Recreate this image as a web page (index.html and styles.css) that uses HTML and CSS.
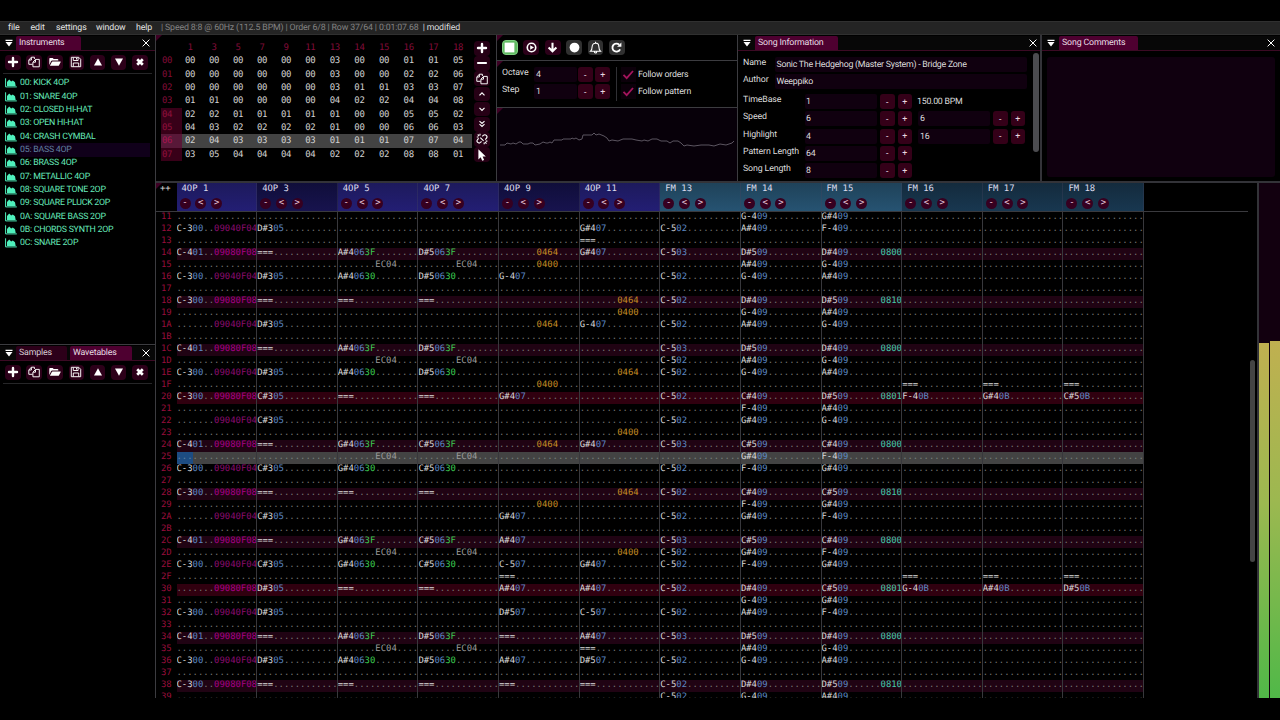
FILE: index.html
```html
<!DOCTYPE html>
<html lang="en">
<head>
<meta charset="utf-8">
<title>Tracker</title>
<link rel="stylesheet" href="styles.css">
</head>
<body>
<svg class="defs" width="0" height="0">
  <symbol id="plus" viewBox="0 0 12 12"><path d="M6 2v8M2 6h8" stroke="currentColor" stroke-width="2.4" stroke-linecap="round"/></symbol>
  <symbol id="minus" viewBox="0 0 12 12"><path d="M2 6h8" stroke="currentColor" stroke-width="2.2" stroke-linecap="round"/></symbol>
  <symbol id="copy" viewBox="0 0 12 12"><path d="M4.6 8.3H.8V4l2.6-2.8h3V3M3.4 1.4V4H1M4.9 6.2l2.6-2.8h3.8v7.4H4.9zM7.5 3.6v2.6H5" fill="none" stroke="currentColor" stroke-width=".95" stroke-linejoin="round"/></symbol>
  <symbol id="folder" viewBox="0 0 12 12"><path d="M.3 9V2.7q0-.7.7-.7h2.7l1 1H8.500q.8 0 .8.8v.8H3.200Q2.400 4.600 2 5.300z" fill="currentColor"/><path d="M.9 9.800 3 5.800q.2-.4.700-.4h7.700q.6 0 .3.600L9.900 9.400q-.2.400-.7.400z" fill="currentColor"/></symbol>
  <symbol id="save" viewBox="0 0 12 12"><path d="M1.300 1.300h7.400l2 2v7.400H1.300zM3.300 1.500v3h4.800v-3M3.300 10.500V7h5.400v3.500M6.500 2v1.500" fill="none" stroke="currentColor" stroke-width=".95" stroke-linejoin="round"/></symbol>
  <symbol id="up" viewBox="0 0 12 12"><path d="M6 2.200 10 9.500H2z" fill="currentColor"/></symbol>
  <symbol id="down" viewBox="0 0 12 12"><path d="M6 9.800 10 2.500H2z" fill="currentColor"/></symbol>
  <symbol id="times" viewBox="0 0 12 12"><path d="m3.200 3.200 5.600 5.600m0-5.600L3.200 8.800" stroke="currentColor" stroke-width="2.700"/></symbol>
  <symbol id="close" viewBox="0 0 12 12"><path d="m2.600 2.600 6.800 6.800m0-6.800L2.600 9.400" stroke="currentColor" stroke-width="1"/></symbol>
  <symbol id="menu" viewBox="0 0 12 12"><path d="M2.500 2.700h7v1.300h-7zM2.500 5h7L6 9.400z" fill="currentColor"/></symbol>
  <symbol id="area" viewBox="0 0 12 10"><path d="M.6.300v8.600h11.200" fill="none" stroke="currentColor" stroke-width="1"/><path d="M2 7.900V4l2.200-2.400 2 1.800 1.600-1L10 4.200l.7 3.700z" fill="currentColor"/></symbol>
  <symbol id="chup" viewBox="0 0 12 12"><path d="m3.500 7.300 2.500-2.500 2.500 2.500" fill="none" stroke="currentColor" stroke-width="1.200"/></symbol>
  <symbol id="chdn" viewBox="0 0 12 12"><path d="m3.500 4.800 2.500 2.500 2.500-2.500" fill="none" stroke="currentColor" stroke-width="1.200"/></symbol>
  <symbol id="chdd" viewBox="0 0 12 12"><path d="m3.500 3.200 2.500 2.300 2.500-2.300M3.500 6.200l2.500 2.300 2.500-2.300" fill="none" stroke="currentColor" stroke-width="1.100"/></symbol>
  <symbol id="unlink" viewBox="0 0 12 12"><path d="M6.300 3.400 7.300 2.400q1.600-1.300 3 0t.1 3L9.200 6.500M5.500 8.300 4.600 9.400q-1.500 1.300-2.900 0t-.1-2.900l1.100-1.100M4.300 4.700l3.300 3.100M4 .8v1.700M.8 4h1.700M1.700 1.500l1.400 1.400M8.200 11.300V9.600M11.400 8.100H9.700M10.500 10.600 9.100 9.200" fill="none" stroke="currentColor" stroke-width="1.150"/></symbol>
  <symbol id="cursor" viewBox="0 0 12 12"><path d="M2.400.2v10.200l2.300-2.200 1.500 3.600 1.900-.8-1.500-3.500h3.200z" fill="currentColor"/></symbol>
  <symbol id="stop" viewBox="0 0 12 12"><path d="M1.500 1.500h9v9h-9z" fill="#fff"/></symbol>
  <symbol id="playc" viewBox="0 0 12 12"><circle cx="6" cy="6" r="3.900" fill="none" stroke="currentColor" stroke-width="1.500"/><path d="M4.800 3.900 8.300 6 4.800 8.100z" fill="currentColor"/></symbol>
  <symbol id="arrdn" viewBox="0 0 12 12"><path d="M6 1.500v8M2.400 6 6 9.500 9.600 6" fill="none" stroke="currentColor" stroke-width="1.900"/></symbol>
  <symbol id="rec" viewBox="0 0 12 12"><circle cx="6" cy="6" r="4.500" fill="currentColor"/></symbol>
  <symbol id="bell" viewBox="0 0 12 12"><path d="M1.300 9.500Q2.900 8 2.900 5.300 3 2.200 6 2t3.100 3.300Q9.100 8 10.700 9.500zM4.900 9.700q0 1.200 1.100 1.300t1.100-1.300M6 .7V2" fill="none" stroke="currentColor" stroke-width="1"/></symbol>
  <symbol id="redo" viewBox="0 0 12 12"><path d="M9.300 7.700A3.700 3.700 0 1 1 8.500 3.400" fill="none" stroke="currentColor" stroke-width="1.700"/><path d="M10.500 1.300v4H6.500z" fill="currentColor"/></symbol>
  <symbol id="check" viewBox="0 0 12 12"><path d="m1.500 6.300 3.200 3.400L11 2.500" fill="none" stroke="currentColor" stroke-width="1.800"/></symbol>
</svg>

<nav class="menubar">
  <span class="m-file">file</span><span class="m-edit">edit</span><span class="m-set">settings</span><span class="m-win">window</span><span class="m-help">help</span>
  <span class="status">| Speed 8:8 @ 60Hz (112.5 BPM) | Order 6/8 | Row 37/64 | 0:01:07.68 &nbsp;<b>| modified</b></span>
</nav>

<main class="main">
  <aside class="side">
    <section class="instruments">
      <header class="tabs"><svg class="ico"><use href="#menu"/></svg><span class="tab active t-ins">Instruments</span><svg class="ico x"><use href="#close"/></svg></header>
      <div class="tools" data-tools></div>
      <ul class="inslist" id="inslist"></ul>
    </section>
    <section class="samples">
      <header class="tabs"><svg class="ico"><use href="#menu"/></svg><span class="tab t-sam">Samples</span><span class="tab active t-wav">Wavetables</span><svg class="ico x"><use href="#close"/></svg></header>
      <div class="tools" data-tools></div>
    </section>
  </aside>

  <div class="work">
    <div class="top">
      <section class="orders corner">
        <div class="ordtable" id="orders"></div>
        <div class="ordtools" id="ordtools"></div>
      </section>

      <div class="controls">
        <section class="transport corner">
          <button class="tb play"><svg><use href="#stop"/></svg></button>
          <button class="tb"><svg><use href="#playc"/></svg></button>
          <button class="tb"><svg><use href="#arrdn"/></svg></button>
          <button class="tb grey"><svg><use href="#rec"/></svg></button>
          <button class="tb grey"><svg><use href="#bell"/></svg></button>
          <button class="tb grey"><svg><use href="#redo"/></svg></button>
        </section>
        <section class="edit corner">
          <div class="steppers">
            <div class="srow"><label>Octave</label><span class="field">4</span><button class="pm">-</button><button class="pm">+</button></div>
            <div class="srow"><label>Step</label><span class="field">1</span><button class="pm">-</button><button class="pm">+</button></div>
          </div>
          <div class="follow">
            <div class="frow"><i><svg><use href="#check"/></svg></i>Follow orders</div>
            <div class="frow"><i><svg><use href="#check"/></svg></i>Follow pattern</div>
          </div>
        </section>
        <section class="scope corner">
          <svg viewBox="0 0 240 73" width="240" height="73"><polyline fill="none" stroke="#5b5560" stroke-width="1" points="3,37 8,37 10,35 14,36 16,35 19,36 22,34 24,34 26,36 31,36 33,35 36,35 38,37 43,36 46,34 49,35 51,35 53,34 55,35 57,32 65,32 66,31 74,31 75,30 77,31 79,30 82,32 85,31 86,27 95,27 97,25 99,27 102,26 107,28 110,30 112,33 115,32 121,33 126,31 135,31 139,32 145,33 147,32 151,33 155,31 160,31 164,33 170,33 173,35 176,33 181,33 184,35 187,38 190,37 197,38 204,37 212,37 217,38 223,36 229,37 235,35 237,33"/></svg>
        </section>
      </div>

      <section class="info">
        <header class="tabs"><svg class="ico"><use href="#menu"/></svg><span class="tab active t-info">Song Information</span><svg class="ico x"><use href="#close"/></svg></header>
        <div class="infobody">
          <div class="form">
            <div class="trow"><label>Name</label><span class="field">Sonic The Hedgehog (Master System) - Bridge Zone</span></div>
            <div class="trow"><label>Author</label><span class="field">Weeppiko</span></div>
            <div class="nrow first"><label>TimeBase</label><span class="field">1</span><button class="pm">-</button><button class="pm">+</button><span class="plain">150.00 BPM</span></div>
            <div class="nrow"><label>Speed</label><span class="field">6</span><button class="pm">-</button><button class="pm">+</button><span class="field f2">6</span><button class="pm">-</button><button class="pm">+</button></div>
            <div class="nrow"><label>Highlight</label><span class="field">4</span><button class="pm">-</button><button class="pm">+</button><span class="field f2">16</span><button class="pm">-</button><button class="pm">+</button></div>
            <div class="nrow"><label>Pattern Length</label><span class="field">64</span><button class="pm">-</button><button class="pm">+</button></div>
            <div class="nrow"><label>Song Length</label><span class="field">8</span><button class="pm">-</button><button class="pm">+</button></div>
          </div>
          <div class="vbar"></div>
        </div>
      </section>

      <section class="comments">
        <header class="tabs"><svg class="ico"><use href="#menu"/></svg><span class="tab active t-com">Song Comments</span><svg class="ico x"><use href="#close"/></svg></header>
        <div class="notes"></div>
      </section>
    </div>

    <div class="bottom">
      <section class="pattern corner">
        <div class="phead" id="phead"></div>
        <div class="prows" id="prows"></div>
        <div class="pscroll"></div>
      </section>
      <section class="meters"><div class="meter l"></div><div class="meter r"></div></section>
    </div>
  </div>
</main>
<script src="script.js"></script>
</body>
</html>
```
FILE: styles.css
```css
* { box-sizing: border-box; }
html, body { margin: 0; background: #000; }
body { width: 1280px; height: 720px; padding-top: 21px; overflow: hidden; color: #dcdcdc; font: 8.8px/12px Roboto, sans-serif; letter-spacing: -.25px; white-space: nowrap; text-rendering: geometricPrecision; }
button { border: 0; padding: 0; color: #eee; font: inherit; display: flex; align-items: center; justify-content: center; }
svg { display: block; flex: none; }
.defs { position: absolute; }

.menubar { height: 14px; background: #242424; border-top: 1px solid #303030; border-bottom: 1px solid #303030; display: flex; align-items: center; padding-left: 8px; line-height: 13px; color: #e4e4e4; letter-spacing: -.1px; }
.m-file { width: 22.500px; }
.m-edit { width: 25.500px; }
.m-set { width: 40px; }
.m-win { width: 40px; }
.m-help { width: 25px; }
.status { color: #828282; letter-spacing: -.15px; }
.status b { font-weight: 400; color: #dcdcdc; }

.main { display: flex; height: 663px; }
.side { width: 156px; border-right: 1px solid #3c3c40; display: flex; flex-direction: column; }
.instruments { height: 309px; padding-top: 1px; }
.samples { flex: 1; border-top: 1px solid #3c3c40; padding-top: 1px; }

.tabs { height: 15px; background: #070707; border-bottom: 1px solid #3c0a24; display: flex; align-items: center; padding: 0 3px; letter-spacing: -.15px; }
.tabs .ico { width: 12px; height: 12px; color: #fff; }
.tabs .x { margin-left: auto; }
.info .tabs { padding-right: 1px; }
.tab { height: 14px; line-height: 14px; background: #2c0019; border-radius: 2px 2px 0 0; padding-left: 3px; color: #d8ccd4; }
.tab.active { background: #4e0030; color: #e8dce4; }
.t-ins { margin-left: 1px; width: 65px; }
.t-sam { margin-left: 1px; width: 51px; }
.t-wav { margin-left: 3px; width: 62px; }
.t-info { margin-left: 2px; width: 83px; }
.t-com { margin-left: 2px; width: 79px; }

.tools { height: 23px; margin: 0 3px; padding: 0 2px; border-bottom: 1px solid #262628; display: flex; align-items: center; gap: 5.7px; }
.tools button { width: 15.5px; height: 15px; background: #2c0019; border-radius: 4px; color: #fff; }
.tools svg { width: 12px; height: 12px; }

.inslist { list-style: none; margin: 0; padding: 2.600px 5px 0; color: #66eabb; }
.inslist li { height: 13.33px; line-height: 14px; display: flex; align-items: center; gap: 3px; }
.inslist svg { width: 12px; height: 10px; color: #50f0bc; }
.inslist .sel { background: linear-gradient(90deg, transparent 8%, #10001a 12%); }

.work { flex: 1; display: flex; flex-direction: column; min-width: 0; }
.top { height: 148px; display: flex; border-bottom: 2px solid #333338; }
.corner { position: relative; }
.corner::before { content: ""; position: absolute; left: 0; top: 0; border-top: 6px solid #3e0024; border-right: 6px solid transparent; }

.orders { width: 341px; border-right: 1px solid #3c3c40; display: flex; padding: 6px 5px 0 5px; font: 9px/14.2px "DejaVu Sans Mono", monospace; letter-spacing: -.3px; }
.ordtable { width: 311px; }
.orow { height: 13.35px; display: grid; grid-template-columns: 17px repeat(5, 24px) 24.5px repeat(6, 24.65px); grid-template-rows: 13.35px; text-align: center; color: #d0d0d0; }
.orow span:first-child { text-align: left; padding-left: 1px; margin-right: -4px; }
.orow.h, .orow span:first-child { color: #800c38; }
.orow.hl span:first-child { background: #380018; color: #90103c; }
.orow.cur { background: #434343; }
.orow.cur span:first-child { background: #581838; color: #a81450; }
.ordtools { display: flex; flex-direction: column; gap: .6px; padding-left: 2px; }
.ordtools button { width: 15.5px; height: 14.6px; background: #260015; border-radius: 4px; color: #fff; }
.ordtools svg { width: 12px; height: 12px; }

.controls { width: 241px; border-right: 1px solid #3c3c40; display: flex; flex-direction: column; }
.transport { height: 26px; display: flex; align-items: center; gap: 5.6px; padding-left: 5px; border-bottom: 1px solid #3c3c40; }
.tb { width: 15.800px; height: 15px; border-radius: 4px; background: #2c0019; color: #fff; }
.tb svg { width: 13px; height: 13px; }
.tb.play { background: #5fb860; border: 1px solid #7fd080; }
.tb.grey { background: #303030; }
.edit { height: 47px; border-bottom: 1px solid #3c3c40; display: flex; padding: 6px 0 0 5px; letter-spacing: -.1px; }
.steppers { width: 115px; height: 34px; border-right: 1px solid #303034; }
.srow, .frow { display: flex; height: 17.4px; }
.srow label { width: 32px; line-height: 13px; }
.field { background: #10000f; height: 15px; line-height: 16px; padding-left: 2px; border-radius: 2px; }
.srow .field { width: 43px; }
.pm { width: 14.500px; height: 15px; background: #340018; border-radius: 3px; margin-left: 2.900px; color: #e8d8e0; }
.srow .pm:nth-of-type(1) { margin-left: 1px; }
.frow { width: 110px; padding-left: 4px; line-height: 16px; letter-spacing: -.2px; }
.frow i { width: 15px; height: 15px; margin-right: 2px; background: #0c000a; }
.frow i svg { width: 12px; height: 13px; margin: 1px; color: #a4145c; }
.scope { flex: 1; background: #070009; }

.info { width: 304px; border-right: 2px solid #333338; padding-top: 1px; }
.infobody { display: flex; height: 130px; overflow: hidden; letter-spacing: -.12px; }
.form { width: 294px; padding: 6px 0 0 5px; }
.trow, .nrow { display: flex; height: 17.300px; }
.trow label { width: 32px; line-height: 13px; }
.trow .field { width: 252px; padding-left: 1.500px; letter-spacing: -.25px; }
.nrow label { width: 62px; line-height: 13px; }
.nrow.first { margin-top: 2.500px; }
.nrow .field { width: 72px; padding-left: 1px; }
.nrow .pm { margin-left: 3px; }
.nrow .f2 { width: 72px; margin-left: 6px; padding-left: 2px; }
.plain { margin-left: 5px; line-height: 16px; letter-spacing: -.25px; }
.vbar { width: 6px; height: 99px; margin-top: 2px; background: #4c4c50; border-radius: 3px; margin-left: 1px; }

.comments { flex: 1; padding-top: 1px; }
.notes { margin: 6px 5px 0 5px; height: 120px; background: #10000f; border-radius: 3px; }

.bottom { flex: 1; display: flex; min-height: 0; }
.pattern { width: 1102px; overflow: hidden; font: 8.923px/12px "DejaVu Sans Mono", monospace; letter-spacing: 0; }
.phead { display: flex; height: 29px; width: 1092px; border-bottom: 1px solid #3a3a3e; }
.pp { width: 20.500px; padding-left: 4px; line-height: 12px; color: #ddd; }
.ch { width: 80.640px; padding-left: 5px; border-right: 1px solid #44446055; line-height: 12px; color: #dde; }
.ch.a { background: linear-gradient(#1d1a5c, #231e74); }
.ch.b { background: linear-gradient(#100e3a, #17134e); }
.ch.c { background: linear-gradient(#1f4259, #265372); }
.ch.d { background: linear-gradient(#142b3d, #183750); }
.chb { display: flex; gap: 4.800px; margin-left: -2px; padding-top: 3px; }
.chb b { width: 11px; height: 11px; border-radius: 6px; background: #360020; color: #e8c8dc; font-weight: 400; line-height: 11px; text-align: center; }
.prows { width: 988.200px; }
.prow { height: 12px; line-height: 10.400px; display: flex; color: #767672; white-space: pre; }
.prow .n { width: 20.500px; padding-left: 5px; color: #980e3c; background: #000; }
.cell { width: 80.640px; height: 12px; border-right: 1px solid #38383c; overflow: hidden; }
.prow.h1 { background: #200313; }
.prow.h2 { background: #30000f; }
.prow.cur { background: #434343; color: #77807c; }
.no { color: #d8d8d8; }
.in { color: #5c88c4; }
.vo { color: #3ccc50; }
.fa { color: #8c0c70; }
.h1 .fa, .h2 .fa { color: #a80088; }
.fe { color: #9c9c9c; }
.fo { color: #c48c24; }
.ft { color: #44ccac; }
.sel { background: #1d4c82; display: inline-block; height: 12px; vertical-align: top; color: #6080a0; }
.pscroll { position: absolute; right: 2px; top: 177px; width: 5px; height: 202px; border-radius: 3px; background: #444; }
.meters { flex: 1; border-left: 2px solid #333338; background: #12000f; display: flex; align-items: flex-end; gap: 1px; }
.meter { width: 10px; background: linear-gradient(#c0b050, #9cb850 45%, #50b848); }
.meter.l { height: 355px; }
.meter.r { height: 357px; }
```
FILE: script.js
```js
const icon = id => `<button><svg><use href="#${id}"/></svg></button>`;

document.querySelectorAll('[data-tools]').forEach(el => {
  el.innerHTML = ['plus', 'copy', 'folder', 'save', 'up', 'down', 'times'].map(icon).join('');
});
document.getElementById('ordtools').innerHTML =
  ['plus', 'minus', 'copy', 'chup', 'chdn', 'chdd', 'unlink', 'cursor'].map(icon).join('');

const instruments = ['00: KICK 4OP', '01: SNARE 4OP', '02: CLOSED HI-HAT', '03: OPEN HI-HAT', '04: CRASH CYMBAL',
  '05: BASS 4OP', '06: BRASS 4OP', '07: METALLIC 4OP', '08: SQUARE TONE 2OP', '09: SQUARE PLUCK 2OP',
  '0A: SQUARE BASS 2OP', '0B: CHORDS SYNTH 2OP', '0C: SNARE 2OP'];
document.getElementById('inslist').innerHTML = instruments.map((t, i) =>
  `<li class="${i === 5 ? 'sel' : ''}"><svg><use href="#area"/></svg>${t}</li>`).join('');

const orders = [
  '00 00 00 00 00 00 00 03 00 00 01 01 05',
  '01 00 00 00 00 00 00 03 00 00 02 02 06',
  '02 00 00 00 00 00 00 03 01 01 03 03 07',
  '03 01 01 00 00 00 00 04 02 02 04 04 08',
  '04 02 02 01 01 01 01 01 00 00 05 05 02',
  '05 04 03 02 02 02 02 01 00 00 06 06 03',
  '06 02 04 03 03 03 03 01 01 01 07 07 04',
  '07 03 05 04 04 04 04 02 02 02 08 08 01'];
const spans = list => list.map(v => `<span>${v}</span>`).join('');
document.getElementById('orders').innerHTML =
  `<div class="orow h">${spans(['', 1, 3, 5, 7, 9, 11, 13, 14, 15, 16, 17, 18])}</div>` +
  orders.map((r, i) => `<div class="orow ${i > 3 ? 'hl' : ''} ${i === 6 ? 'cur' : ''}">${spans(r.split(' '))}</div>`).join('');

const channels = [['4OP 1', 'a'], ['4OP 3', 'b'], ['4OP 5', 'a'], ['4OP 7', 'a'], ['4OP 9', 'b'], ['4OP 11', 'a'],
  ['FM 13', 'c'], ['FM 14', 'c'], ['FM 15', 'c'], ['FM 16', 'd'], ['FM 17', 'd'], ['FM 18', 'd']];
document.getElementById('phead').innerHTML = '<div class="pp">++</div>' + channels.map(([n, c]) =>
  `<div class="ch ${c}">${n}<div class="chb"><b>-</b><b>&lt;</b><b>&gt;</b></div></div>`).join('');

// One line per row: row number, then channelIndex:cell. "x" = 09040F04, "y" = 09080F08 effects;
// "@" marks the first effect column, "!" the second.
const rows = `
11|7:G-409|8:G#409
12|0:C-300x|1:D#305|5:G#407|6:C-502|7:A#409|8:F-409
13|5:===
14|0:C-401y|1:===|2:A#4063F|3:D#5063F|4:@0464|5:G#407|6:C-503|7:D#509|8:D#409!0800
15|2:@EC04|3:@EC04|4:@0400|7:A#409|8:G-409
16|0:C-300x|1:D#305|2:A#40630|3:D#50630|4:G-407|6:C-502|7:G-409|8:A#409
17
18|0:C-300y|1:===|2:===|3:===|5:@0464|6:C-502|7:D#409|8:D#509!0810
19|5:@0400|7:G-409|8:A#409
1A|0:x|1:D#305|4:@0464|5:G-407|6:C-502|7:A#409|8:G-409
1B
1C|0:C-401y|1:===|2:A#4063F|3:D#5063F|6:C-503|7:D#509|8:D#409!0800
1D|2:@EC04|3:@EC04|6:C-502|7:A#409|8:G-409
1E|0:C-300x|1:D#305|2:A#40630|3:D#50630|5:@0464|6:C-502|7:G-409|8:A#409
1F|4:@0400|9:===|10:===|11:===
20|0:C-300y|1:C#305|2:===|3:===|4:G#407|6:C-502|7:C#409|8:D#509!0801|9:F-40B|10:G#40B|11:C#50B
21|7:F-409|8:A#409
22|0:x|1:C#305|6:C-502|7:G#409|8:G-409
23|5:@0400
24|0:C-401y|1:===|2:G#4063F|3:C#5063F|4:@0464|5:G#407|6:C-503|7:C#509|8:C#409!0800
25|2:@EC04|3:@EC04|7:G#409|8:F-409
26|0:C-300x|1:C#305|2:G#40630|3:C#50630|6:C-502|7:F-409|8:G#409
27
28|0:C-300y|1:===|2:===|3:===|5:@0464|6:C-502|7:C#409|8:C#509!0810
29|4:@0400|7:F-409|8:G#409
2A|0:x|1:C#305|4:G#407|6:C-502|7:G#409|8:F-409
2B
2C|0:C-401y|1:===|2:G#4063F|3:C#5063F|4:A#407|6:C-503|7:C#509|8:C#409!0800
2D|2:@EC04|3:@EC04|5:@0400|6:C-502|7:G#409|8:F-409
2E|0:C-300x|1:C#305|2:G#40630|3:C#50630|4:C-507|5:G#407|6:C-502|7:F-409|8:G#409
2F|4:===|9:===|10:===|11:===
30|0:y|1:D#305|2:===|3:===|4:A#407|5:A#407|6:C-502|7:D#409|8:C#509!0801|9:G-40B|10:A#40B|11:D#50B
31|7:G-409|8:G#409
32|0:C-300x|1:D#305|4:D#507|5:C-507|6:C-502|7:A#409|8:F-409
33
34|0:C-401y|1:===|2:A#4063F|3:D#5063F|4:===|5:A#407|6:C-503|7:D#509|8:D#409!0800
35|2:@EC04|3:@EC04|5:===|7:A#409|8:G-409
36|0:C-300x|1:D#305|2:A#40630|3:D#50630|4:A#407|5:D#507|6:C-502|7:G-409|8:A#409
37
38|0:C-300y|1:===|2:===|3:===|4:===|5:===|6:C-502|7:D#409|8:D#509!0810
39|6:C-502|7:G-409|8:A#409`.trim().split('\n');

const part = (text, cls) => text.startsWith('.') ? text : `<span class="${cls}">${text}</span>`;

function cell(src) {
  let fx1 = '....', fx2 = '....';
  src = src.replace(/[xy]$/, m => { fx1 = m === 'x' ? '0904' : '0908'; fx2 = m === 'x' ? '0F04' : '0F08'; return ''; });
  src = src.replace(/@(.{4})/, (_, v) => { fx1 = v; return ''; });
  src = src.replace(/!(.{4})/, (_, v) => { fx2 = v; return ''; });
  src = src.padEnd(7, '.');
  const kind = v => v.startsWith('EC') ? 'fe' : /^09|^0F/.test(v) ? 'fa' : v.startsWith('04') ? 'fo' : 'ft';
  return part(src.slice(0, 3), 'no') + part(src.slice(3, 5), 'in') + part(src.slice(5, 7), 'vo') +
    part(fx1, kind(fx1)) + part(fx2, kind(fx2));
}

document.getElementById('prows').innerHTML = rows.map(line => {
  const [num, ...items] = line.split('|');
  const map = {};
  items.forEach(it => { const k = it.indexOf(':'); map[it.slice(0, k)] = it.slice(k + 1); });
  const n = parseInt(num, 16);
  const cls = num === '25' ? 'cur' : n % 16 === 0 ? 'h2' : n % 4 === 0 ? 'h1' : '';
  const cells = channels.map((_, i) => {
    const body = num === '25' && i === 0 ? '<span class="sel">...</span>............' : cell(map[i] || '');
    return `<div class="cell">${body}</div>`;
  }).join('');
  return `<div class="prow ${cls}"><div class="n">${num}</div>${cells}</div>`;
}).join('');
```
